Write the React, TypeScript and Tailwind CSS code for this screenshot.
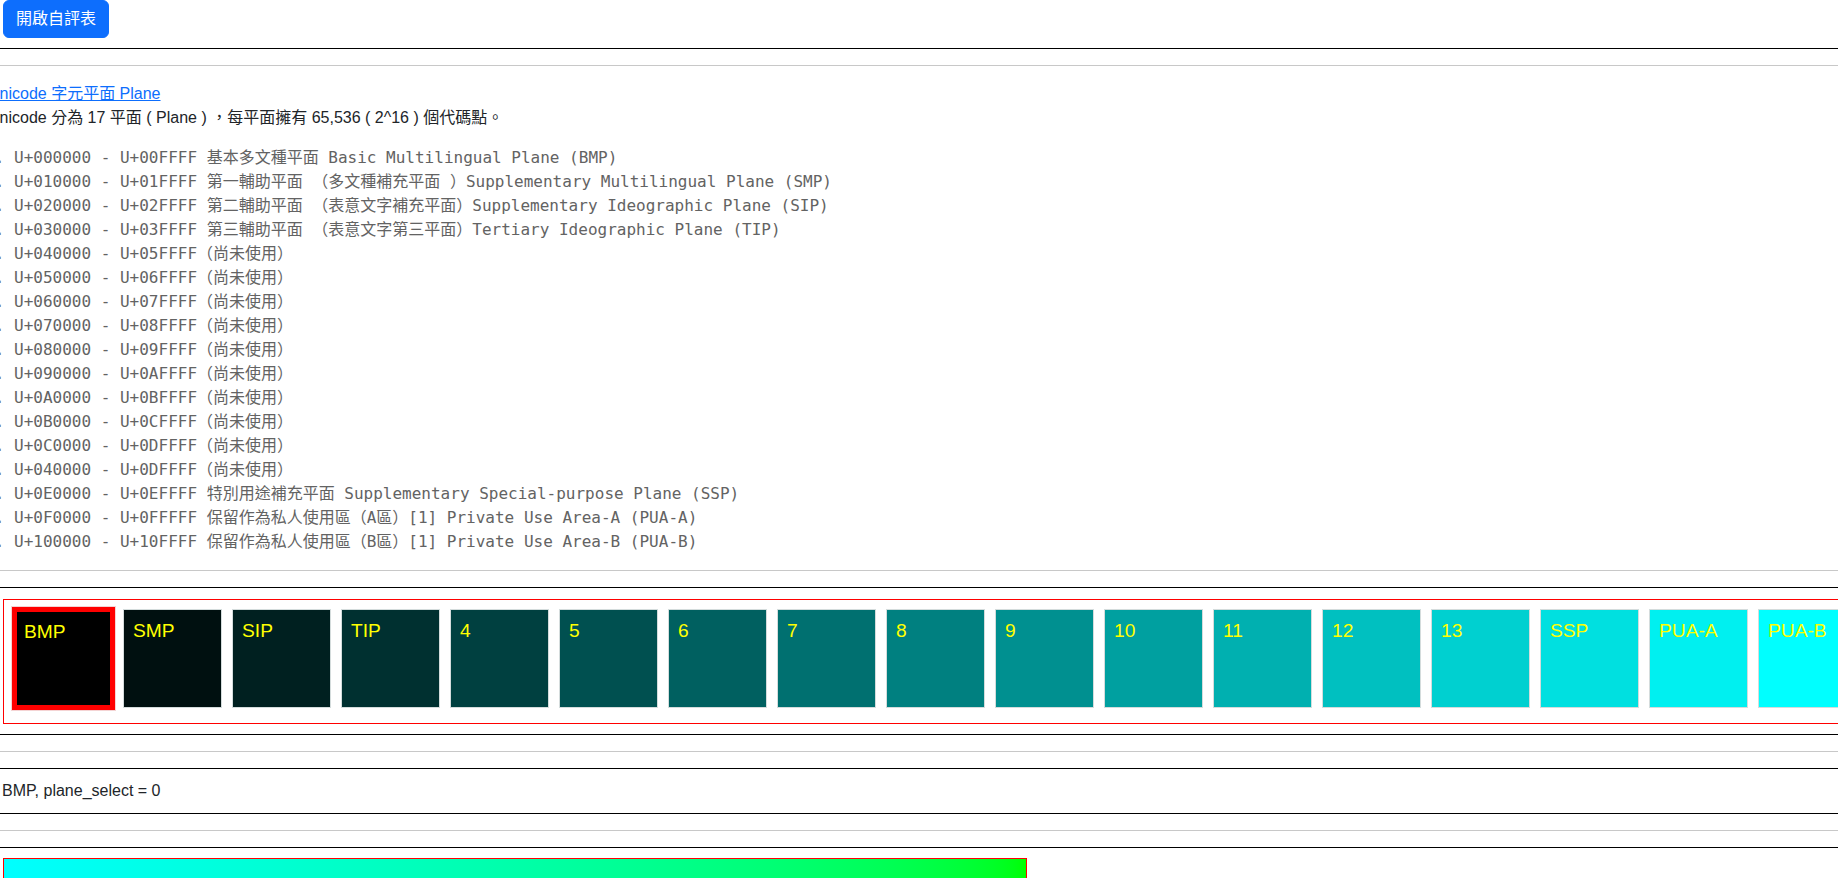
import { FC } from 'react';

const ranges: string[] = [
  'U+000000 - U+00FFFF 基本多文種平面 Basic Multilingual Plane (BMP)',
  'U+010000 - U+01FFFF 第一輔助平面 （多文種補充平面 ）Supplementary Multilingual Plane (SMP)',
  'U+020000 - U+02FFFF 第二輔助平面 （表意文字補充平面）Supplementary Ideographic Plane (SIP)',
  'U+030000 - U+03FFFF 第三輔助平面 （表意文字第三平面）Tertiary Ideographic Plane (TIP)',
  'U+040000 - U+05FFFF（尚未使用）',
  'U+050000 - U+06FFFF（尚未使用）',
  'U+060000 - U+07FFFF（尚未使用）',
  'U+070000 - U+08FFFF（尚未使用）',
  'U+080000 - U+09FFFF（尚未使用）',
  'U+090000 - U+0AFFFF（尚未使用）',
  'U+0A0000 - U+0BFFFF（尚未使用）',
  'U+0B0000 - U+0CFFFF（尚未使用）',
  'U+0C0000 - U+0DFFFF（尚未使用）',
  'U+040000 - U+0DFFFF（尚未使用）',
  'U+0E0000 - U+0EFFFF 特別用途補充平面 Supplementary Special-purpose Plane (SSP)',
  'U+0F0000 - U+0FFFFF 保留作為私人使用區（A區）[1] Private Use Area-A (PUA-A)',
  'U+100000 - U+10FFFF 保留作為私人使用區（B區）[1] Private Use Area-B (PUA-B)',
];

const planes: string[] = [
  'BMP', 'SMP', 'SIP', 'TIP', '4', '5', '6', '7', '8', '9', '10', '11', '12', '13', 'SSP', 'PUA-A', 'PUA-B',
];

const selected = 0;

const PlaneBox: FC<{ label: string; index: number }> = ({ label, index }) => {
  const v = Math.min(255, index * 16);
  const bg = `rgb(0, ${v}, ${v})`;

  if (index === selected) {
    return (
      <div className="-mx-[3px] h-[105px] w-[105px] shrink-0 border border-[#f4d4d4]">
        <div className="h-full w-full border-[5px] border-[#ff0000] pl-[7px] pt-[6px] text-[19.2px] leading-[28.8px] text-[#ffff00]" style={{ backgroundColor: bg }}>
          {label}
        </div>
      </div>
    );
  }

  return (
    <div className="h-[99px] w-[99px] shrink-0 border border-[#d4dcdc] pl-[9px] pt-[7px] text-[19.2px] leading-[28.8px] text-[#ffff00]" style={{ backgroundColor: bg }}>
      {label}
    </div>
  );
};

export default function App() {
  return (
    <div className="h-[878px] overflow-hidden bg-white font-['Liberation_Sans','Noto_Sans_CJK_TC',sans-serif] text-[16px] leading-6 text-[#212529]">
      <div className="pl-[3px]">
        <button className="h-[38px] rounded-[6px] border border-[#0d6efd] bg-[#0d6efd] px-3 text-white">
          開啟自評表
        </button>
      </div>

      <div className="mt-[10px] border-t border-black" />
      <hr className="mt-4 border-[#c8c8c8]" />

      <div className="ml-[-12px] mt-4">
        <a href="#" className="block w-max text-[#0d6efd] underline">
          Unicode 字元平面 Plane
        </a>
        <p>Unicode 分為 17 平面 ( Plane ) ，每平面擁有 65,536 ( 2^16 ) 個代碼點。</p>
        <ol className="mt-4 list-decimal pl-[26px] font-['DejaVu_Sans_Mono','Noto_Sans_CJK_TC',monospace] text-[#636363]">
          {ranges.map((r) => (
            <li key={r} className="whitespace-pre">{r}</li>
          ))}
        </ol>
      </div>

      <hr className="mt-4 border-[#c8c8c8]" />
      <div className="mt-4 border-t border-black" />

      <div className="ml-[3px] mt-[11px] flex w-max items-center gap-[10px] border border-[#ff0000] pb-[12px] pl-[10px] pr-[10px] pt-[6px]">
        {planes.map((p, i) => (
          <PlaneBox key={p} label={p} index={i} />
        ))}
      </div>

      <div className="mt-[10px] border-t border-black" />
      <hr className="mt-4 border-[#c8c8c8]" />
      <div className="mt-4 border-y border-black pb-[10px] pl-[2px] pt-[10px]">BMP, plane_select = 0</div>
      <hr className="mt-4 border-[#c8c8c8]" />
      <div className="mt-4 border-t border-black" />

      <div className="ml-[3px] mt-[10px] h-[300px] w-[1024px] border border-[#ff0000] bg-linear-to-r from-[#00ffff] to-[#00ff00]" />
    </div>
  );
}
